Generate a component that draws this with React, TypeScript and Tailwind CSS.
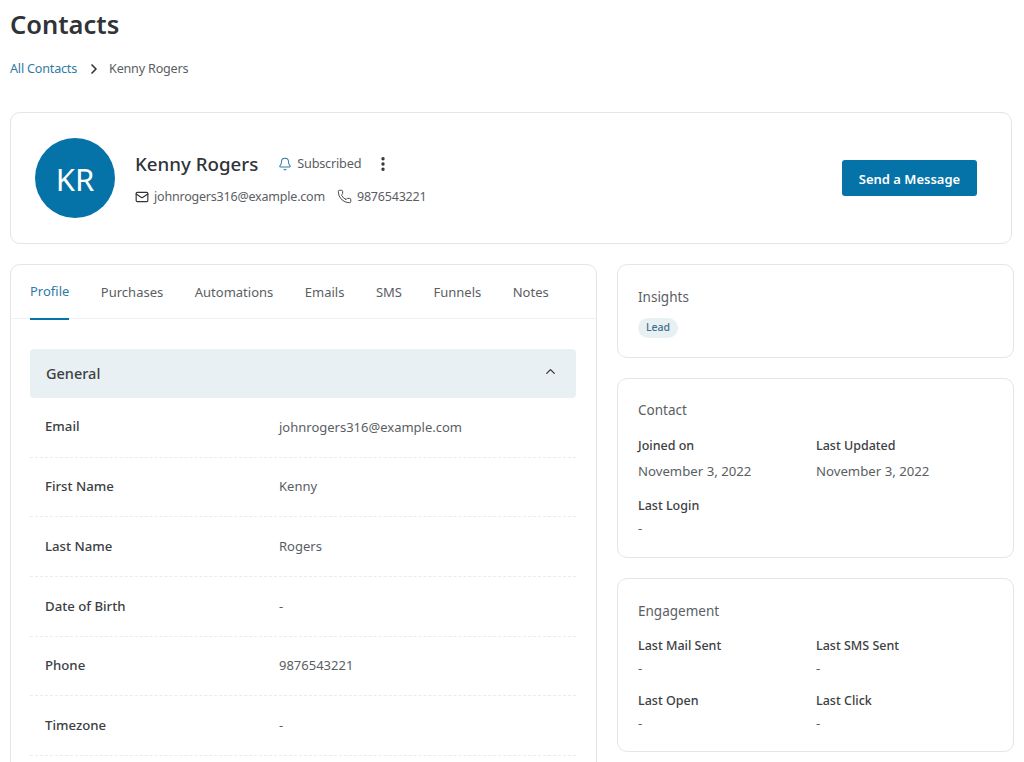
import { Bell, ChevronRight, ChevronUp, Mail, MoreVertical, Phone } from "lucide-react";

const tabs = ["Profile", "Purchases", "Automations", "Emails", "SMS", "Funnels", "Notes"];

const general = [
  { label: "Email", value: "johnrogers316@example.com" },
  { label: "First Name", value: "Kenny" },
  { label: "Last Name", value: "Rogers" },
  { label: "Date of Birth", value: "-" },
  { label: "Phone", value: "9876543221" },
  { label: "Timezone", value: "-" },
];

function Stat({ label, value, dated, className }: { label: string; value: string; dated?: boolean; className?: string }) {
  return (
    <div className={className}>
      <div className="text-[12.5px] leading-[18px] font-medium text-[#3c4043]">{label}</div>
      <div className={dated ? "mt-[7px] text-[13.2px] leading-[18px] text-[#5a5e63]" : "mt-[4px] text-[13.2px] leading-[18px] text-[#5a5e63]"}>
        {value}
      </div>
    </div>
  );
}

function SideCard({ title, className, children }: { title: string; className: string; children: React.ReactNode }) {
  return (
    <section className={`rounded-[10px] border border-[#e3e5e8] bg-white px-[20px] ${className}`}>
      <h3 className="text-[13.5px] leading-[20px] font-normal text-[#5a5e63]">{title}</h3>
      {children}
    </section>
  );
}

export default function App() {
  return (
    <div
      className="h-[762px] w-[1024px] overflow-hidden bg-white pl-[10px] text-[#3c4043]"
      style={{ fontFamily: '"Noto Sans", "Open Sans", sans-serif' }}
    >
      <h1 className="pt-[6px] text-[25.5px] leading-[36px] font-semibold text-[#303337]">Contacts</h1>

      <nav className="mt-[17px] flex h-[20px] items-center text-[12.6px] tracking-[-0.2px]">
        <a className="text-[#2f7ba3]">All Contacts</a>
        <ChevronRight className="ml-[9px] h-[16px] w-[16px] text-[#303337]" strokeWidth={2.5} />
        <span className="ml-[7px] text-[#5a5e63]">Kenny Rogers</span>
      </nav>

      {/* Profile header */}
      <section className="mt-[33px] flex h-[132px] w-[1002px] items-center rounded-[10px] border border-[#e3e5e8] pr-[34px] pl-[24px]">
        <div className="flex h-[80px] w-[80px] shrink-0 items-center justify-center rounded-full bg-[#0573a8] pt-[2px] text-[31px] text-white">
          KR
        </div>
        <div className="ml-[20px] flex-1">
          <div className="flex items-center">
            <span className="text-[18.7px] leading-[26px] font-medium text-[#303337]">Kenny Rogers</span>
            <Bell className="ml-[20px] h-[14px] w-[14px] text-[#2f7ba3]" strokeWidth={1.75} />
            <span className="ml-[5px] text-[12.7px] tracking-[-0.2px] text-[#5a5e63]">Subscribed</span>
            <MoreVertical className="ml-[13px] h-[18px] w-[18px] text-[#303337]" strokeWidth={2.5} />
          </div>
          <div className="mt-[11px] flex items-center text-[12.5px] leading-[18px] tracking-[-0.2px] text-[#5a5e63]">
            <Mail className="h-[14px] w-[14px] text-[#303337]" strokeWidth={2} />
            <span className="ml-[5px]">johnrogers316@example.com</span>
            <Phone className="ml-[12px] h-[15px] w-[15px] text-[#3c4043]" strokeWidth={1.5} />
            <span className="ml-[5px]">9876543221</span>
          </div>
        </div>
        <button className="h-[36px] w-[135px] rounded-[3px] bg-[#0573a8] pt-[3px] text-[13px] font-semibold text-white">
          Send a Message
        </button>
      </section>

      <div className="mt-[20px] flex items-start gap-[20px]">
        {/* Tabs + general details */}
        <section className="h-[520px] w-[587px] shrink-0 rounded-t-[10px] border border-[#e3e5e8]">
          <div className="flex h-[54px] gap-[31.5px] border-b border-[#eef0f2] px-[19px]">
            {tabs.map((tab, i) => (
              <div
                key={tab}
                className={
                  i === 0
                    ? "-mb-px flex h-[55px] items-center border-b-2 border-[#0573a8] pt-[1px] text-[13px] text-[#2f7ba3]"
                    : "flex h-[54px] items-center pt-[1px] text-[13px] text-[#5a5e63]"
                }
              >
                {tab}
              </div>
            ))}
          </div>

          <div className="pt-[30px] pr-[20px] pl-[19px]">
            <div className="flex h-[49px] items-center justify-between rounded-[4px] bg-[#e9f0f4] pr-[18px] pl-[16px]">
              <span className="text-[14.5px] font-medium text-[#3c4043]">General</span>
              <ChevronUp className="mb-[4px] h-[15px] w-[15px] text-[#303337]" strokeWidth={2} />
            </div>
            {general.map((row) => (
              <div key={row.label} className="flex h-[59.7px] items-center border-b border-dashed border-[#e9ebed]">
                <div className="w-[249px] pl-[15px] text-[13.2px] font-medium text-[#3c4043]">{row.label}</div>
                <div className="text-[13px] text-[#5a5e63]">{row.value}</div>
              </div>
            ))}
          </div>
        </section>

        {/* Right column */}
        <div className="flex w-[397px] shrink-0 flex-col gap-[20px]">
          <SideCard title="Insights" className="h-[94px] pt-[22px]">
            <span className="mt-[11px] flex h-[20px] w-[40px] items-center justify-center rounded-full bg-[#e9f0f4] text-[10.5px] font-medium text-[#3f6f8c]">
              Lead
            </span>
          </SideCard>

          <SideCard title="Contact" className="h-[180px] pt-[21px]">
            <div className="mt-[17px] grid grid-cols-[178px_1fr]">
              <Stat label="Joined on" value="November 3, 2022" dated />
              <Stat label="Last Updated" value="November 3, 2022" dated />
              <Stat label="Last Login" value="-" className="mt-[17px]" />
            </div>
          </SideCard>

          <SideCard title="Engagement" className="h-[174px] pt-[22px]">
            <div className="mt-[16px] grid grid-cols-[178px_1fr] gap-y-[15px]">
              <Stat label="Last Mail Sent" value="-" />
              <Stat label="Last SMS Sent" value="-" />
              <Stat label="Last Open" value="-" />
              <Stat label="Last Click" value="-" />
            </div>
          </SideCard>
        </div>
      </div>
    </div>
  );
}
